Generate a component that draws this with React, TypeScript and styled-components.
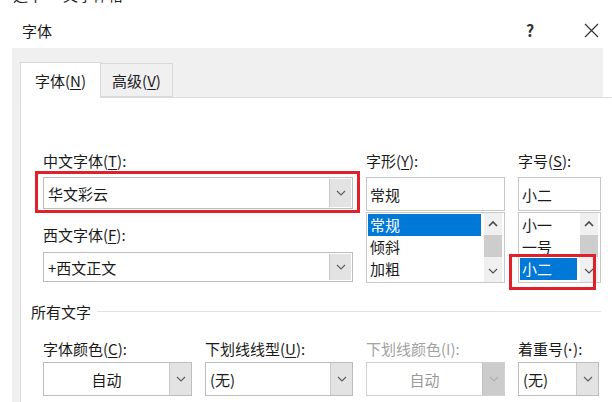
import styled, { createGlobalStyle } from "styled-components";

const GlobalStyle = createGlobalStyle`
  html, body { margin: 0; padding: 0; background: #fff; }
  body {
    font-family: "Noto Sans CJK SC", "Noto Sans", sans-serif;
    color: #1a1a1a;
  }
  #root { width: 612px; height: 402px; overflow: hidden; }
  u { text-underline-offset: 2px; text-decoration-thickness: 1px; }
`;

const Chevron = ({ color = "#5c5c5c", up = false }: { color?: string; up?: boolean }) => (
  <svg width="10" height="6" viewBox="0 0 10 6">
    <polyline
      points={up ? "1,5 5,1 9,5" : "1,1 5,5 9,1"}
      fill="none"
      stroke={color}
      strokeWidth={up ? 1.7 : 1.1}
    />
  </svg>
);

const App = () => {
  return (
    <Page>
      <GlobalStyle />
      <CutLine>
        <CutText>
          选中<span>文字体格</span>
        </CutText>
      </CutLine>
      <TitleBar>
        <Title>字体</Title>
        <Help>?</Help>
        <Close>
          <svg width="15" height="15" viewBox="0 0 15 15">
            <path d="M1 1 L14 14 M14 1 L1 14" stroke="#333" strokeWidth="1.2" />
          </svg>
        </Close>
      </TitleBar>
      <Dialog>
        <TabBand>
          <Tab $active>
            字体(<u>N</u>)
          </Tab>
          <Tab>
            高级(<u>V</u>)
          </Tab>
        </TabBand>
        <PanelWrap>
          <Panel>
            <TopGrid>
              <Field>
                <Label>
                  中文字体(<u>T</u>):
                </Label>
                <Marked $gap={7}>
                  <Combo $height={32}>
                    <ComboText>华文彩云</ComboText>
                    <DropButton $inset>
                      <Chevron />
                    </DropButton>
                  </Combo>
                </Marked>
                <Label $gap={17}>
                  西文字体(<u>F</u>):
                </Label>
                <Combo $height={30} $gap={8}>
                  <ComboText>+西文正文</ComboText>
                  <DropButton $inset>
                    <Chevron />
                  </DropButton>
                </Combo>
              </Field>

              <Field>
                <Label>
                  字形(<u>Y</u>):
                </Label>
                <TextBox>常规</TextBox>
                <ListBox>
                  <Items>
                    <Item $selected>常规</Item>
                    <Item>倾斜</Item>
                    <Item>加粗</Item>
                  </Items>
                  <Scrollbar>
                    <ArrowCell>
                      <Chevron up color="#4a4a4a" />
                    </ArrowCell>
                    <Thumb />
                    <Track />
                    <ArrowCell>
                      <Chevron color="#4a4a4a" />
                    </ArrowCell>
                  </Scrollbar>
                </ListBox>
              </Field>

              <Field>
                <Label>
                  字号(<u>S</u>):
                </Label>
                <TextBox>小二</TextBox>
                <ListBox>
                  <Items>
                    <Item>小一</Item>
                    <Item>一号</Item>
                    <Item $selected>小二</Item>
                  </Items>
                  <Scrollbar>
                    <ArrowCell>
                      <Chevron up color="#4a4a4a" />
                    </ArrowCell>
                    <Thumb />
                    <Track />
                    <ArrowCell>
                      <Chevron color="#4a4a4a" />
                    </ArrowCell>
                  </Scrollbar>
                  <SizeMark />
                </ListBox>
              </Field>
            </TopGrid>

            <SectionRow>
              <span>所有文字</span>
              <Rule />
            </SectionRow>

            <BottomGrid>
              <Field>
                <Label>
                  字体颜色(<u>C</u>):
                </Label>
                <Combo $height={34} $gap={4}>
                  <ComboText $center>自动</ComboText>
                  <DropButton>
                    <Chevron />
                  </DropButton>
                </Combo>
              </Field>
              <Field>
                <Label>
                  下划线线型(<u>U</u>):
                </Label>
                <Combo $height={34} $gap={4}>
                  <ComboText>(无)</ComboText>
                  <DropButton>
                    <Chevron />
                  </DropButton>
                </Combo>
              </Field>
              <Field>
                <Label $disabled>下划线颜色(I):</Label>
                <Combo $height={34} $gap={4} $disabled>
                  <ComboText $center $disabled>
                    自动
                  </ComboText>
                  <DropButton $disabled>
                    <Chevron color="#b0b0b0" />
                  </DropButton>
                </Combo>
              </Field>
              <Field>
                <Label>
                  着重号(<Dot>·</Dot>):
                </Label>
                <Combo $height={34} $gap={4}>
                  <ComboText>(无)</ComboText>
                  <DropButton>
                    <Chevron />
                  </DropButton>
                </Combo>
              </Field>
            </BottomGrid>
          </Panel>
        </PanelWrap>
      </Dialog>
    </Page>
  );
};

const Page = styled.div`
  width: 612px;
  height: 402px;
  overflow: hidden;
  display: flex;
  flex-direction: column;
  background: #fff;
`;

const CutLine = styled.div`
  height: 6px;
  overflow: hidden;
  padding-left: 13px;
`;

const CutText = styled.div`
  font-size: 15px;
  line-height: 20px;
  margin-top: -15px;
  color: #222;
  span {
    margin-left: 20px;
  }
`;

const TitleBar = styled.div`
  height: 42px;
  box-sizing: border-box;
  padding: 6px 13px 0 22px;
  display: flex;
  align-items: center;
`;

const Title = styled.div`
  font-size: 15px;
  color: #1a1a1a;
`;

const Help = styled.div`
  margin-left: auto;
  width: 20px;
  text-align: center;
  font-size: 16px;
  font-weight: 700;
  color: #333;
`;

const Close = styled.div`
  margin-left: 43px;
  width: 16px;
  display: flex;
  align-items: center;
  justify-content: center;
`;

const Dialog = styled.div`
  margin-left: 12px;
  flex: 1;
  display: flex;
  flex-direction: column;
`;

const TabBand = styled.div`
  width: 591px;
  height: 49px;
  box-sizing: border-box;
  background: #f0f0f0;
  padding: 14px 0 0 8px;
  display: flex;
  align-items: flex-start;
`;

const Tab = styled.div<{ $active?: boolean }>`
  position: relative;
  z-index: 1;
  box-sizing: border-box;
  width: ${(p) => (p.$active ? 81 : 72)}px;
  height: ${(p) => (p.$active ? 36 : 34)}px;
  margin-top: ${(p) => (p.$active ? 0 : 1)}px;
  background: ${(p) => (p.$active ? "#fff" : "#f0f0f0")};
  border: 1px solid #d9d9d9;
  border-bottom: ${(p) => (p.$active ? "none" : "1px solid #d9d9d9")};
  border-left: ${(p) => (p.$active ? "1px solid #d9d9d9" : "none")};
  font-size: 15px;
  display: flex;
  align-items: center;
  justify-content: center;
  color: #1a1a1a;
`;

const PanelWrap = styled.div`
  flex: 1;
  background: #f0f0f0;
  padding-left: 8px;
  display: flex;
`;

const Panel = styled.div`
  flex: 1;
  background: #fff;
  border-left: 1px solid #dcdcdc;
  border-top: 1px solid #dcdcdc;
  padding: 54px 0 0 22px;
`;

const TopGrid = styled.div`
  display: grid;
  grid-template-columns: 310px 139px 83px;
  column-gap: 13px;
`;

const BottomGrid = styled.div`
  display: grid;
  grid-template-columns: 149px 148px 139px 81px;
  column-gap: 13px;
  margin-top: 20px;
`;

const Field = styled.div`
  display: flex;
  flex-direction: column;
`;

const Label = styled.div<{ $gap?: number; $disabled?: boolean }>`
  height: 18px;
  line-height: 18px;
  font-size: 15px;
  margin-top: ${(p) => p.$gap ?? 0}px;
  color: ${(p) => (p.$disabled ? "#a2a2a2" : "#1a1a1a")};
  white-space: nowrap;
`;

const Dot = styled.span`
  font-family: "Liberation Sans", sans-serif;
  font-weight: 700;
`;

const Marked = styled.div<{ $gap: number }>`
  position: relative;
  margin-top: ${(p) => p.$gap}px;
  &::after {
    content: "";
    position: absolute;
    top: -6px;
    bottom: -4px;
    left: -8px;
    right: -7px;
    border: 3px solid #e0202a;
    pointer-events: none;
  }
`;

const Combo = styled.div<{ $height: number; $gap?: number; $disabled?: boolean }>`
  box-sizing: border-box;
  height: ${(p) => p.$height}px;
  margin-top: ${(p) => p.$gap ?? 0}px;
  border: 1px solid ${(p) => (p.$disabled ? "#d0d0d0" : "#bdbdbd")};
  background: #fff;
  display: flex;
  align-items: stretch;
`;

const ComboText = styled.div<{ $center?: boolean; $disabled?: boolean }>`
  flex: 1;
  display: flex;
  align-items: center;
  justify-content: ${(p) => (p.$center ? "center" : "flex-start")};
  padding-left: ${(p) => (p.$center ? 0 : 4)}px;
  font-size: 15px;
  color: ${(p) => (p.$disabled ? "#9a9a9a" : "#1a1a1a")};
  white-space: nowrap;
`;

const DropButton = styled.div<{ $inset?: boolean; $disabled?: boolean }>`
  width: 22px;
  box-sizing: border-box;
  margin: ${(p) => (p.$inset ? "1px" : "0")};
  background: ${(p) => (p.$disabled ? "#cccccc" : "#e3e3e3")};
  border-left: 1px solid ${(p) => (p.$disabled ? "#c4c4c4" : "#c9c9c9")};
  display: flex;
  align-items: center;
  justify-content: center;
`;

const TextBox = styled.div`
  box-sizing: border-box;
  height: 34px;
  margin-top: 7px;
  border: 1px solid #c8c8c8;
  display: flex;
  align-items: center;
  padding-left: 3px;
  font-size: 15px;
`;

const ListBox = styled.div`
  position: relative;
  box-sizing: border-box;
  height: 71px;
  margin-top: 1px;
  border: 1px solid #c8c8c8;
  display: flex;
`;

const Items = styled.div`
  flex: 1;
  padding: 1px 3px 0 1px;
  display: flex;
  flex-direction: column;
  overflow: hidden;
`;

const Item = styled.div<{ $selected?: boolean }>`
  height: 22px;
  flex: none;
  line-height: 22px;
  padding-left: 2px;
  font-size: 15px;
  background: ${(p) => (p.$selected ? "#0078d7" : "transparent")};
  color: ${(p) => (p.$selected ? "#fff" : "#1a1a1a")};
`;

const Scrollbar = styled.div`
  width: 18px;
  margin-right: 2px;
  background: #f0f0f0;
  display: flex;
  flex-direction: column;
`;

const ArrowCell = styled.div`
  height: 22px;
  display: flex;
  align-items: center;
  justify-content: center;
`;

const Thumb = styled.div`
  height: 22px;
  background: #cdcdcd;
`;

const Track = styled.div`
  flex: 1;
`;

const SizeMark = styled.div`
  position: absolute;
  top: 41px;
  left: -10px;
  right: 4px;
  bottom: -8px;
  border: 3px solid #e0202a;
  pointer-events: none;
`;

const SectionRow = styled.div`
  margin: 19px 0 0 -12px;
  height: 18px;
  display: flex;
  align-items: center;
  font-size: 15px;
  color: #1a1a1a;
`;

const Rule = styled.div`
  flex: 1;
  height: 1px;
  background: #e3e3e3;
  margin: 0 11px 0 6px;
`;

export default App;
